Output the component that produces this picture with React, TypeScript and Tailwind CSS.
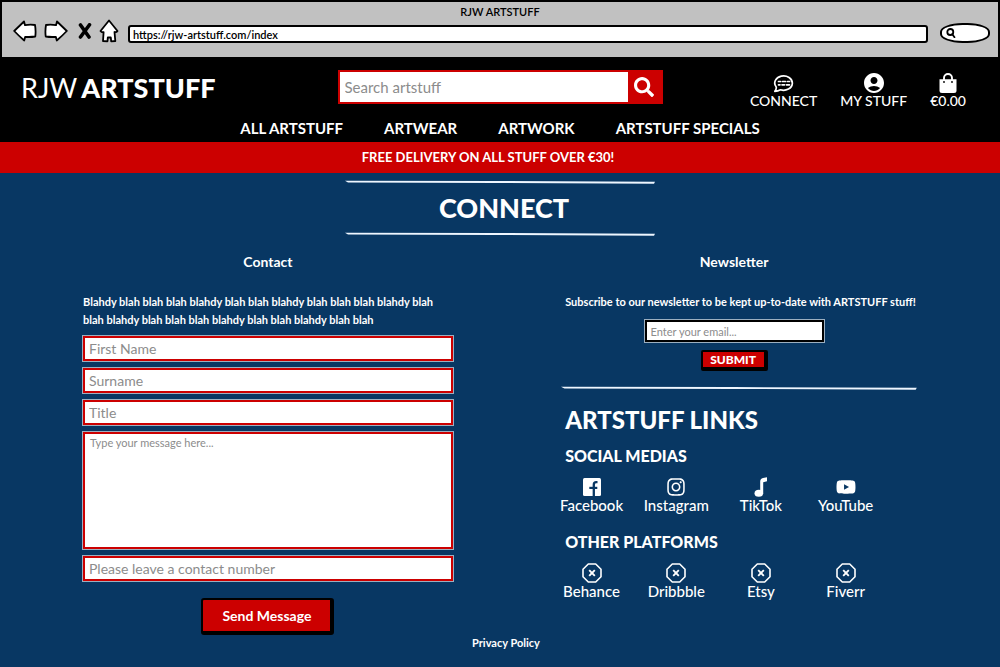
import { FaSearch, FaInstagram, FaYoutube } from "react-icons/fa";
import { MdAccountCircle } from "react-icons/md";
import type { ReactNode } from "react";

const field =
  "block h-[25px] w-full border-2 border-[#cc0000] bg-white px-1 text-[14px] leading-5 text-gray-800 outline-1 outline-white/60 placeholder:text-[#8c8c8c]";

function BackIcon({ flip = false }: { flip?: boolean }) {
  return (
    <svg viewBox="0 0 24 22" className={flip ? "h-[22px] w-6 -scale-x-100" : "h-[22px] w-6"} aria-hidden="true">
      <path
        d="M1.2 11 L11 1.5 L12 5.2 Q17 4.2 22 5 Q23 10.500 22.300 16.500 Q17 17.300 12.200 16.800 L11.200 20.500 Q6 16 1.200 11Z"
        fill="#fff"
        stroke="#000"
        strokeWidth="1.800"
        strokeLinejoin="round"
      />
    </svg>
  );
}

function CloseIcon() {
  return (
    <svg viewBox="0 0 14 16" className="h-4 w-[14px]" aria-hidden="true">
      <path d="M2.500 2 L11 14 M11.500 1.800 L2.500 14" stroke="#000" strokeWidth="3.600" strokeLinecap="round" />
    </svg>
  );
}

function HomeIcon() {
  return (
    <svg viewBox="0 0 20 24" className="h-6 w-5" aria-hidden="true">
      <path
        d="M10 1.500 L18.500 12 Q17.500 13.500 15.500 13 L16.300 22 L12.200 22.300 L11.800 18.500 L8.800 18.500 L8.500 22.300 L4 22 L4.600 13.200 Q2.500 13.500 1.500 12 Z"
        fill="#fff"
        stroke="#000"
        strokeWidth="1.800"
        strokeLinejoin="round"
      />
    </svg>
  );
}

function ChatIcon() {
  return (
    <svg viewBox="0 0 22 20" className="h-5 w-[22px]" fill="none" stroke="#fff" strokeLinecap="round" aria-hidden="true">
      <path
        d="M3.200 14 A8.800 7.200 0 1 1 7.500 16.800 Q5 18.300 1.800 18.300 Q3.600 16.300 3.200 14Z"
        strokeWidth="1.700"
        strokeLinejoin="round"
      />
      <path d="M5.500 8.500h2 M9.500 8.500h3 M14.500 8.500h2 M5.500 11.800h1.500 M9 11.800h2.500 M13.500 11.800h3" strokeWidth="1.700" />
    </svg>
  );
}

function BagIcon() {
  return (
    <svg viewBox="0 0 20 20" className="size-5" aria-hidden="true">
      <path d="M6 8V5a4 4 0 0 1 8 0v3" fill="none" stroke="#fff" strokeWidth="1.900" />
      <path d="M1.500 6.300h17v11.200a2.500 2.500 0 0 1-2.500 2.500h-12a2.500 2.500 0 0 1-2.500-2.500z" fill="#fff" />
      <circle cx="6" cy="9" r="0.900" fill="#000" />
      <circle cx="14" cy="9" r="0.900" fill="#000" />
    </svg>
  );
}

function FacebookIcon() {
  return (
    <svg viewBox="0 0 18 18" className="size-[18px]" aria-hidden="true">
      <rect width="18" height="18" rx="1.500" fill="#fff" />
      <path d="M14.500 4.200h-1.300q-2.400 0-2.400 2.500v11.300" fill="none" stroke="#083763" strokeWidth="2.300" />
      <path d="M6.300 8.800h8v2.200h-8z" fill="#083763" />
    </svg>
  );
}

function NoteIcon() {
  return (
    <svg viewBox="0 0 14 20" className="h-5 w-[14px]" fill="#fff" aria-hidden="true">
      <ellipse cx="4.800" cy="16.300" rx="4.300" ry="3.500" />
      <path d="M6.200 16.500V4.500Q6.200 1.500 9 1 L13 0.300V4.300L9.200 5.200V16.500Z" />
    </svg>
  );
}

function OctagonIcon() {
  return (
    <svg viewBox="0 0 20 20" className="size-5" fill="none" stroke="#fff" aria-hidden="true">
      <path d="M6.300 1h7.400L19 6.300v7.400L13.700 19H6.300L1 13.700V6.300z" strokeWidth="1.600" strokeLinejoin="round" />
      <path d="M7.200 7.200l5.600 5.600M12.800 7.200l-5.600 5.600" strokeWidth="1.900" />
    </svg>
  );
}

function Rule() {
  return (
    <svg viewBox="0 0 310 4" preserveAspectRatio="none" className="block h-1 w-full" aria-hidden="true">
      <path d="M0 0.700 L150 1 L310 1.800 L309 3.700 L150 3 L3 2.500 Z" fill="#eef6ff" />
    </svg>
  );
}

function IconLink({ icon, label }: { icon: ReactNode; label: string }) {
  return (
    <a href="#" className="flex flex-col items-center">
      <span className="flex h-5 items-center">{icon}</span>
      {label}
    </a>
  );
}

const navItems = ["ALL ARTSTUFF", "ARTWEAR", "ARTWORK", "ARTSTUFF SPECIALS"];

const socials = [
  { label: "Facebook", icon: <FacebookIcon /> },
  { label: "Instagram", icon: <FaInstagram className="size-5" /> },
  { label: "TikTok", icon: <NoteIcon /> },
  { label: "YouTube", icon: <FaYoutube className="size-5" /> },
];

const platforms = ["Behance", "Dribbble", "Etsy", "Fiverr"];

export default function App() {
  return (
    <div className="min-h-screen bg-[#083763] font-['Lato','Liberation_Sans',sans-serif] text-white">
      <div className="border-x-2 border-t-2 border-black bg-[#c1c1c1] pb-[14px] text-black">
        <p className="pt-[2px] text-center text-[11px] leading-4 font-semibold">RJW ARTSTUFF</p>
        <div className="-mt-px flex items-end pr-2 pl-[11px]">
          <div className="flex items-center">
            <button type="button" aria-label="Back">
              <BackIcon />
            </button>
            <button type="button" aria-label="Forward" className="ml-[7px]">
              <BackIcon flip />
            </button>
            <button type="button" aria-label="Stop" className="ml-[10px]">
              <CloseIcon />
            </button>
            <button type="button" aria-label="Home" className="ml-[7px]">
              <HomeIcon />
            </button>
          </div>
          <input
            type="text"
            aria-label="Address"
            defaultValue="https://rjw-artstuff.com/index"
            className="ml-[9px] h-[18px] min-w-0 flex-1 rounded-[3px] border-2 border-black bg-white px-[3px] text-[11px] font-semibold"
          />
          <div className="ml-3 flex h-5 w-[50px] items-center rounded-[45%] border-2 border-black bg-white pl-1">
            <svg viewBox="0 0 10 10" className="size-[10px] shrink-0" fill="none" stroke="#000" strokeWidth="1.800" aria-hidden="true">
              <circle cx="4.300" cy="4" r="3" />
              <path d="M6.300 6.200 L8.500 9.200" strokeLinecap="round" />
            </svg>
            <input type="text" aria-label="Search the web" className="w-full min-w-0 bg-transparent text-[11px] outline-none" />
          </div>
        </div>
      </div>

      <header className="bg-black pt-[13px] pb-1">
        <div className="grid grid-cols-[1fr_325px_1fr] items-start">
          <a href="#" className="flex items-baseline gap-1 pt-[2px] pl-[21px] text-[27px] leading-8">
            <span>RJW</span>
            <span className="font-black">ARTSTUFF</span>
          </a>
          <form className="flex h-[34px] border-2 border-[#cc0000] bg-[#cc0000]">
            <input
              type="search"
              aria-label="Search artstuff"
              placeholder="Search artstuff"
              className="min-w-0 flex-1 bg-white px-[5px] text-[15px] text-gray-800 placeholder:text-[#8c8c8c]"
            />
            <button type="button" aria-label="Search" className="flex w-[33px] items-center justify-center">
              <FaSearch className="size-5" />
            </button>
          </form>
          <div className="flex justify-end gap-[23px] pt-[3px] pr-[34px] text-[14px] leading-4 font-medium">
            <IconLink icon={<ChatIcon />} label="CONNECT" />
            <IconLink icon={<MdAccountCircle className="size-6" />} label="MY STUFF" />
            <IconLink icon={<BagIcon />} label="€0.00" />
          </div>
        </div>
        <nav className="mt-[9px] flex justify-center gap-[41px] text-[15px] leading-5 font-bold">
          {navItems.map((item) => (
            <a key={item} href="#">
              {item}
            </a>
          ))}
        </nav>
      </header>

      <p className="bg-[#cc0000] pr-6 text-center text-[13px] leading-[31px] font-bold">
        FREE DELIVERY ON ALL STUFF OVER €30!
      </p>

      <main className="pt-[7px]">
        <div className="mx-auto w-[31%]">
          <Rule />
          <h1 className="pl-2 text-center text-[27px] leading-[48px] font-black">CONNECT</h1>
          <Rule />
        </div>

        <div className="mt-4 grid grid-cols-[minmax(0,370fr)_minmax(0,356fr)] gap-x-[13%] px-[8.3%]">
          <section>
            <h2 className="text-center text-[14px] leading-5 font-bold">Contact</h2>
            <p className="mt-[21px] text-[11px] leading-[18px] font-bold">
              Blahdy blah blah blah blahdy blah blah blahdy blah blah blah blahdy blah
              <br />
              blah blahdy blah blah blah blahdy blah blah blahdy blah blah
            </p>
            <form className="mt-[7px] flex flex-col gap-[7px]">
              <input aria-label="First Name" placeholder="First Name" className={field} />
              <input aria-label="Surname" placeholder="Surname" className={field} />
              <input aria-label="Title" placeholder="Title" className={field} />
              <textarea
                aria-label="Message"
                placeholder="Type your message here..."
                className="block h-[117px] w-full resize-none border-2 border-[#cc0000] bg-white px-[5px] text-[11px] leading-[18px] text-gray-800 outline-1 outline-white/60 placeholder:text-[#8c8c8c]"
              />
              <input type="tel" aria-label="Contact number" placeholder="Please leave a contact number" className={field} />
              <button
                type="button"
                className="mt-[10px] h-[37px] w-[133px] self-center rounded-[3px] border-2 border-r-4 border-b-4 border-black bg-[#cc0000] text-[14px] font-bold"
              >
                Send Message
              </button>
            </form>
          </section>

          <section>
            <form className="flex flex-col items-center pr-[10px]">
              <h2 className="text-[14px] leading-5 font-bold">Newsletter</h2>
              <p className="mt-[21px] self-start pl-1 text-[11px] leading-[18px] font-bold whitespace-nowrap">
                Subscribe to our newsletter to be kept up-to-date with ARTSTUFF stuff!
              </p>
              <input
                type="email"
                aria-label="Email"
                placeholder="Enter your email..."
                className="mt-[9px] h-[22px] w-[179px] border-2 border-black bg-white px-1 text-[11px] text-gray-800 outline-1 outline-white/60 placeholder:text-[#8c8c8c]"
              />
              <button
                type="button"
                className="mt-2 h-[21px] w-[67px] rounded-[2px] border-2 border-r-4 border-b-4 border-black bg-[#cc0000] text-[12px] leading-[15px] font-black"
              >
                SUBMIT
              </button>
            </form>
            <div className="mt-[15px]">
              <Rule />
            </div>
            <h2 className="mt-4 pl-1 text-[24px] leading-7 font-black">ARTSTUFF LINKS</h2>
            <h3 className="mt-3 pl-1 text-[16px] leading-5 font-black">SOCIAL MEDIAS</h3>
            <div className="mt-[11px] mr-[29px] -ml-3 grid grid-cols-4 text-[15px] leading-4 font-medium">
              {socials.map((s) => (
                <IconLink key={s.label} icon={s.icon} label={s.label} />
              ))}
            </div>
            <h3 className="mt-[19px] pl-1 text-[16px] leading-5 font-black">OTHER PLATFORMS</h3>
            <div className="mt-[11px] mr-[29px] -ml-3 grid grid-cols-4 text-[15px] leading-4 font-medium">
              {platforms.map((p) => (
                <IconLink key={p} icon={<OctagonIcon />} label={p} />
              ))}
            </div>
          </section>
        </div>
      </main>

      <footer className="pl-3 text-center text-[11px] leading-4 font-bold">
        <a href="#">Privacy Policy</a>
      </footer>
    </div>
  );
}
